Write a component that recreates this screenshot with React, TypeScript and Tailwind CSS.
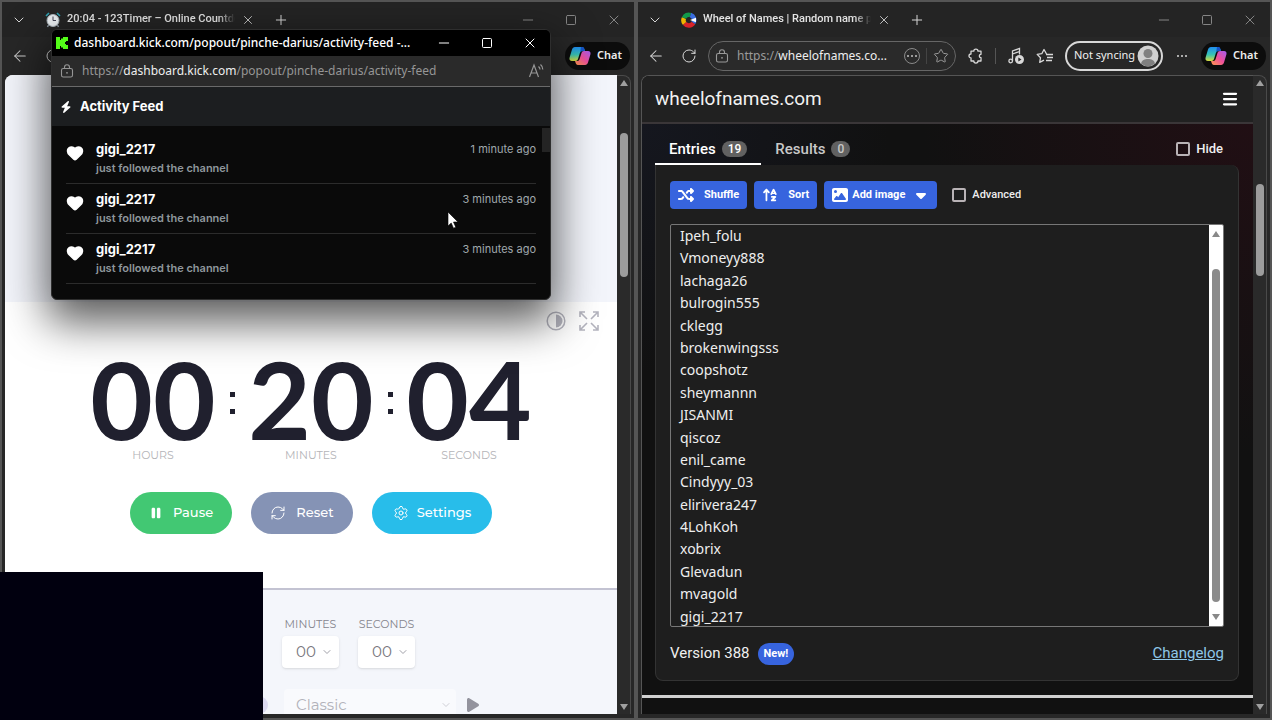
import type { ReactNode } from "react";
import {
  ArrowLeft,
  ChevronDown,
  Heart,
  Menu,
  Minus,
  Plus,
  RefreshCw,
  RotateCw,
  Settings,
  Square,
  Star,
  X,
} from "lucide-react";
import { FaArrowUpAZ, FaBolt, FaCaretDown, FaImage, FaPause, FaPlay, FaShuffle } from "react-icons/fa6";

const FOLLOWS = [
  { name: "gigi_2217", when: "1 minute ago" },
  { name: "gigi_2217", when: "3 minutes ago" },
  { name: "gigi_2217", when: "3 minutes ago" },
];

const ENTRIES = [
  "Ipeh_folu",
  "Vmoneyy888",
  "lachaga26",
  "bulrogin555",
  "cklegg",
  "brokenwingsss",
  "coopshotz",
  "sheymannn",
  "JISANMI",
  "qiscoz",
  "enil_came",
  "Cindyyy_03",
  "elirivera247",
  "4LohKoh",
  "xobrix",
  "Glevadun",
  "mvagold",
  "gigi_2217",
];

/* ---------- ICONS ---------- */

function ClockIcon() {
  return (
    <svg viewBox="0 0 16 16" className="size-4 shrink-0">
      <path d="M1 4 4 1M15 4l-3-3" stroke="#2f9fb0" strokeWidth="1.6" />
      <path d="m3.500 13-1 2M12.500 13l1 2" stroke="#8d99a3" strokeWidth="1.4" />
      <circle cx="8" cy="8.500" r="6" fill="#e9edf0" stroke="#aab4bb" />
      <path d="M8 4.500v4h3" stroke="#445" fill="none" />
    </svg>
  );
}

function WheelIcon() {
  return (
    <svg viewBox="0 0 16 16" className="size-4 shrink-0" fill="none" strokeWidth="4.500">
      <path d="M3.700 11.500A5 5 0 0 1 3 6" stroke="#f0b400" />
      <path d="M3 6A5 5 0 0 1 9.500 3" stroke="#12994a" />
      <path d="M9.500 3A5.300 5.300 0 0 1 12.300 11" stroke="#3a6de0" />
      <path d="M12.300 11A5.300 5.300 0 0 1 3.700 11.500" stroke="#d8232a" />
      <path d="m9 8 6-2.200v4.400z" fill="#fff" stroke="none" />
    </svg>
  );
}

function KickIcon() {
  return (
    <svg viewBox="0 0 12 12" className="size-3 shrink-0" fill="#53fc18">
      <path d="M0 0h4v3h1V1.500h2V0h5v4h-2v1H9v2h1v1h2v4H7v-1.500H5V9H4v3H0z" />
    </svg>
  );
}

function LockIcon() {
  return (
    <svg viewBox="0 0 14 14" className="size-3.5 shrink-0" fill="none" stroke="currentColor" strokeWidth="1.1">
      <rect x="1.500" y="4.500" width="11" height="8.500" rx="1.800" />
      <path d="M4.500 4.500V3.300a2.500 2.500 0 0 1 5 0v1.200" />
      <circle cx="7" cy="8.800" r=".9" fill="currentColor" stroke="none" />
    </svg>
  );
}

function CopilotIcon() {
  return (
    <svg viewBox="0 0 22 20" className="h-5 w-5.5 shrink-0">
      <defs>
        <linearGradient id="copilotCool" x1="0" y1="0" x2="0" y2="1">
          <stop offset="0" stopColor="#1f8df0" />
          <stop offset=".55" stopColor="#38c4b4" />
          <stop offset="1" stopColor="#d8dc3c" />
        </linearGradient>
        <linearGradient id="copilotWarm" x1="1" y1="0" x2="0" y2="1">
          <stop offset="0" stopColor="#a25cf0" />
          <stop offset=".5" stopColor="#ee4f9c" />
          <stop offset="1" stopColor="#ff9a4a" />
        </linearGradient>
      </defs>
      <path d="M6 1h7c1.600 0 2 1 2.500 2.500L16 5h-2.500c-1.500 0-2.200.8-2.700 2.300L9 13c-.4 1.300-1 2-2.500 2H3c-2 0-3-1.500-2.400-3.500L3 3.500C3.500 2 4.400 1 6 1z" fill="url(#copilotCool)" />
      <path d="M12 1h1.500c1.200 0 1.700 1 2 2.500L16 5h-2.500c-1.200 0-2 .6-2.500 2z" fill="#1554c8" />
      <path d="M16 19H9c-1.600 0-2-1-2.500-2.500L6 15h2c1.500 0 2.200-.8 2.700-2.300L12.500 7c.4-1.300 1-2 2.500-2h4c2 0 3 1.500 2.400 3.500L19 16.500C18.500 18 17.600 19 16 19z" fill="url(#copilotWarm)" />
    </svg>
  );
}

function PuzzleIcon() {
  return (
    <svg viewBox="0 0 16 16" className="size-4" fill="none" stroke="currentColor" strokeWidth="1.300" strokeLinejoin="round">
      <path d="M3 3.200h2.800a2.100 2.100 0 0 1 4.200 0h3V6.300a1.700 1.700 0 0 0 0 3.400v3.300h-3a2.100 2.100 0 0 1-4.200 0H3v-3a2 2 0 0 1 0-4z" />
    </svg>
  );
}

function MusicIcon() {
  return (
    <svg viewBox="0 0 18 18" className="size-4.5" fill="none" stroke="currentColor" strokeWidth="1.300">
      <path d="M5.500 14V4l7-2.500v6M5.500 7l7-2.500" />
      <circle cx="3.700" cy="14" r="1.800" />
      <circle cx="12.500" cy="12.500" r="4.500" fill="currentColor" stroke="none" />
      <path d="m11.300 10.500 3.200 2-3.200 2z" fill="#262626" stroke="none" />
    </svg>
  );
}

function FavoritesIcon() {
  return (
    <svg viewBox="0 0 18 16" className="h-4 w-4.5" fill="none" stroke="currentColor" strokeWidth="1.300" strokeLinejoin="round">
      <path d="M10.500 6 8 1.500 5.800 5.700 1.200 6.400l3.300 3.300-.8 4.700L8 12.200" />
      <path d="M10 6.500h7M11 9.500h6M10 12.500h6" />
    </svg>
  );
}

function ReadAloudIcon() {
  return (
    <svg viewBox="0 0 16 16" className="size-4" fill="none" stroke="currentColor" strokeWidth="1.200">
      <path d="m1.500 14 4.500-12 4.500 12M3 10h6" />
      <path d="M10.500 3.500c1 .8 1.500 1.800 1.500 3M12.500 1.500c1.500 1.200 2.300 3 2.300 5" />
    </svg>
  );
}

function ContrastIcon() {
  return (
    <svg viewBox="0 0 20 20" className="size-5">
      <circle cx="10" cy="10" r="8.800" fill="none" stroke="currentColor" strokeWidth="1.500" />
      <path d="M10 3.500a6.500 6.500 0 0 1 0 13z" fill="currentColor" />
    </svg>
  );
}

function ExpandIcon() {
  return (
    <svg viewBox="0 0 20 20" className="size-5" fill="none" stroke="currentColor" strokeWidth="1.600">
      <path d="M1 6V1h5M14 1h5v5M19 14v5h-5M6 19H1v-5M1 1l7 7M19 1l-7 7M19 19l-7-7M1 19l7-7" />
    </svg>
  );
}

/* ---------- BROWSER CHROME ---------- */

function WindowButtons({ className }: { className: string }) {
  return (
    <div className={`flex items-center gap-[29px] ${className}`}>
      <button aria-label="Minimize"><Minus className="size-4" strokeWidth={1.5} /></button>
      <button aria-label="Maximize"><Square className="size-3" strokeWidth={2} /></button>
      <button aria-label="Close"><X className="size-4" strokeWidth={1.5} /></button>
    </div>
  );
}

function TitleBar({ icon, title }: { icon: ReactNode; title: string }) {
  return (
    <div className="flex h-[35px] items-center bg-[#242424] pr-3 pl-[9px] text-[#d6d6d6]">
      <button aria-label="Tab list"><ChevronDown className="size-4" strokeWidth={1.5} /></button>
      <div className="ml-3.5 flex w-[214px] items-center gap-1.5 pl-1">
        {icon}
        <span className="flex-1 overflow-hidden mask-r-from-90% font-[Roboto,sans-serif] text-[11px] font-medium whitespace-nowrap text-[#e4e4e4]">
          {title}
        </span>
        <button aria-label="Close tab"><X className="size-3.5" strokeWidth={1.5} /></button>
      </div>
      <button aria-label="New tab" className="ml-[18px]"><Plus className="size-4" strokeWidth={1.5} /></button>
      <WindowButtons className="ml-auto text-[#858585]" />
    </div>
  );
}

function ChatButton() {
  return (
    <button className="flex h-7 shrink-0 items-center gap-1.5 rounded-full bg-[#0c0c0c] pr-2 pl-1 text-[11px] font-semibold text-[#ececec]">
      <CopilotIcon />
      Chat
    </button>
  );
}

function PageScrollbar({ offset, size }: { offset: string; size: string }) {
  return (
    <div className="flex w-3.5 shrink-0 flex-col items-center rounded-tr-lg border-t border-r border-[#4a4a4a] bg-[#2a2a2a] py-1">
      <div className="border-x-4 border-b-6 border-x-transparent border-b-[#a0a0a0]" />
      <div className={`w-2 rounded-full bg-[#9c9c9c] ${offset} ${size}`} />
      <div className="mt-auto border-x-4 border-t-6 border-x-transparent border-t-[#a0a0a0]" />
    </div>
  );
}

/* ---------- TIMER ---------- */

function ClockPart({ value, label }: { value: string; label: string }) {
  return (
    <div className="flex w-[130px] flex-col items-center">
      <span className="mb-1.5 font-[Lato,sans-serif] text-[108px] leading-[85px] font-bold text-[#20202e]">{value}</span>
      <span className="text-[11px] leading-4 text-[#b4b4b8]">{label}</span>
    </div>
  );
}

function Colon() {
  return (
    <div className="mt-9 flex w-7 flex-col items-center gap-3">
      <span className="size-[5px] bg-[#20202e]" />
      <span className="size-[5px] bg-[#20202e]" />
    </div>
  );
}

function TimeSelect({ id, label }: { id: string; label: string }) {
  return (
    <div className="flex w-[57px] flex-col items-center">
      <label htmlFor={id} className="text-[11px] leading-4 text-[#85858d]">{label}</label>
      <div className="relative mt-1 w-full">
        <select id={id} className="h-8 w-full appearance-none rounded bg-white pl-3.5 text-[15px] text-[#77777d] shadow-sm">
          <option>00</option>
        </select>
        <ChevronDown className="pointer-events-none absolute top-2.5 right-1.5 size-3 text-[#a0a0a8]" strokeWidth={2} />
      </div>
    </div>
  );
}

function TimerWindow() {
  return (
    <section className="flex min-w-0 flex-1 flex-col border-x-2 border-t-2 border-[#555] bg-[#272727]">
      <TitleBar icon={<ClockIcon />} title="20:04 - 123Timer – Online Countdown" />
      <div className="mb-px flex h-[37px] items-center justify-between pr-1 pl-[9px] text-[#d0d0d0]">
        <div className="flex gap-4">
          <button aria-label="Back"><ArrowLeft className="size-[18px]" strokeWidth={1.4} /></button>
          <button aria-label="Refresh"><RotateCw className="size-4" strokeWidth={1.5} /></button>
        </div>
        <ChatButton />
      </div>

      <div className="flex min-h-0 flex-1 px-[3px]">
        <main className="flex min-w-0 flex-1 flex-col overflow-hidden rounded-tl-lg bg-white font-[Montserrat,Inter,sans-serif]">
          <div className="h-[227px] shrink-0 bg-[#f3f5fb]" />

          <div className="h-[288px] shrink-0 border-b-2 border-[#c3c3d2]">
            <div className="flex justify-end gap-[13px] pt-[9px] pr-[18px] text-[#b4b4be]">
              <button aria-label="Dark mode"><ContrastIcon /></button>
              <button aria-label="Full screen"><ExpandIcon /></button>
            </div>
            <div className="mt-[25px] flex justify-center">
              <ClockPart value="00" label="HOURS" />
              <Colon />
              <ClockPart value="20" label="MINUTES" />
              <Colon />
              <ClockPart value="04" label="SECONDS" />
            </div>
            <div className="mt-[29px] flex justify-center gap-[19px] text-[13px] font-medium text-white">
              <button className="flex h-[42px] w-[102px] items-center justify-center gap-2.5 rounded-full bg-[#42c873]">
                <FaPause className="size-3.5" />
                Pause
              </button>
              <button className="flex h-[42px] w-[102px] items-center justify-center gap-2.5 rounded-full bg-[#8593b5]">
                <RefreshCw className="size-4" strokeWidth={1.5} />
                Reset
              </button>
              <button className="flex h-[42px] w-[120px] items-center justify-center gap-2 rounded-full bg-[#28bdea]">
                <Settings className="size-4" strokeWidth={1.5} />
                Settings
              </button>
            </div>
          </div>

          <div className="flex-1 overflow-hidden bg-[#f4f6fb] pt-[26px]">
            <div className="ml-[277px] flex gap-[19px]">
              <TimeSelect id="minutes" label="MINUTES" />
              <TimeSelect id="seconds" label="SECONDS" />
            </div>
            <div className="mt-[21px] ml-[245px] flex items-center">
              <span className="size-[18px] rounded-full bg-[#dcdaf0]" />
              <div className="relative ml-4 w-[172px]">
                <select aria-label="Sound" className="h-8 w-full appearance-none rounded bg-[#f9fafd] pl-3 text-[15px] text-[#b2b2ba]">
                  <option>Classic</option>
                </select>
                <ChevronDown className="pointer-events-none absolute top-2.5 right-1 size-3 text-[#cfcfd6]" strokeWidth={2} />
              </div>
              <button aria-label="Play sound" className="ml-2.5 text-[#93939d]"><FaPlay className="h-4 w-3.5" /></button>
            </div>
          </div>
        </main>
        <PageScrollbar offset="mt-[47px]" size="h-36" />
      </div>
      <div className="h-1.5 border-b-2 border-[#555]" />
    </section>
  );
}

/* ---------- WHEEL OF NAMES ---------- */

const BLUE_BUTTON = "flex h-7 items-center rounded bg-[#3764de] px-2 text-[11px] font-bold text-white";

function CheckBox({ id, label, className }: { id: string; label: string; className: string }) {
  return (
    <div className={`flex items-center gap-1.5 font-medium text-[#eee] ${className}`}>
      <input id={id} type="checkbox" className="size-3.5 appearance-none rounded-xs border-2 border-[#b9b3b6]" />
      <label htmlFor={id}>{label}</label>
    </div>
  );
}

function WheelWindow() {
  return (
    <section className="flex min-w-0 flex-1 flex-col border-x-2 border-t-2 border-[#555] bg-[#272727]">
      <TitleBar icon={<WheelIcon />} title="Wheel of Names | Random name picker" />
      <div className="mb-px flex h-[37px] items-center pr-1 pl-[9px] text-[#d8d8d8]">
        <button aria-label="Back"><ArrowLeft className="size-[18px]" strokeWidth={1.4} /></button>
        <button aria-label="Refresh" className="ml-4"><RotateCw className="size-4" strokeWidth={1.5} /></button>
        <div className="ml-[11px] flex h-[30px] w-[248px] items-center rounded-full border border-[#666] bg-[#2a2a2a] px-1.5 text-[#9a9a9a]">
          <LockIcon />
          <span className="ml-2 flex-1 text-xs whitespace-nowrap">
            https://<span className="text-[#eee]">wheelofnames.co...</span>
          </span>
          <button aria-label="More" className="ml-2.5 flex size-4 items-center justify-center gap-0.5 rounded-full border border-[#8a8a8a]">
            <i className="size-0.5 bg-[#9a9a9a]" />
            <i className="size-0.5 bg-[#9a9a9a]" />
            <i className="size-0.5 bg-[#9a9a9a]" />
          </button>
          <span className="mx-1.5 h-4 w-px bg-[#444]" />
          <button aria-label="Favorite"><Star className="size-4" strokeWidth={1.5} /></button>
        </div>
        <div className="ml-3 flex flex-1 items-center justify-between">
          <button aria-label="Extensions"><PuzzleIcon /></button>
          <span className="h-4 w-px bg-[#555]" />
          <button aria-label="Media"><MusicIcon /></button>
          <button aria-label="Favorites"><FavoritesIcon /></button>
          <button className="flex h-[30px] items-center gap-0.5 rounded-full border-2 border-[#d8d8d8] pr-0.5 pl-[7px] text-[11px] whitespace-nowrap text-[#f0f0f0]">
            Not syncing
            <svg viewBox="0 0 22 22" className="size-[22px]">
              <circle cx="11" cy="11" r="10.500" fill="#d0d0d0" />
              <circle cx="11" cy="8.500" r="4.500" fill="#808080" />
              <path d="M4 18.500c1-3.500 3.500-4.500 7-4.500s6 1 7 4.500a10.500 10.500 0 0 1-14 0z" fill="#808080" />
            </svg>
          </button>
          <button aria-label="Menu" className="flex w-4 items-center justify-center gap-0.5">
            <i className="size-0.5 rounded-full bg-[#d8d8d8]" />
            <i className="size-0.5 rounded-full bg-[#d8d8d8]" />
            <i className="size-0.5 rounded-full bg-[#d8d8d8]" />
          </button>
          <ChatButton />
        </div>
      </div>

      <div className="flex min-h-0 flex-1 px-[3px]">
        <main className="flex min-w-0 flex-1 flex-col overflow-hidden rounded-tl-lg border-t border-l border-[#555] bg-[#111] font-[Roboto,sans-serif]">
          <header className="flex h-12 shrink-0 items-center justify-between border-b-2 border-[#3a3638] bg-[#212121] pr-3.5 pl-[13px]">
            <h1 className="text-[19px] text-[#f2f2f2]">wheelofnames.com</h1>
            <button aria-label="Menu"><Menu className="size-[18px] text-white" strokeWidth={3} /></button>
          </header>

          <div className="flex min-h-0 flex-1 flex-col bg-[radial-gradient(circle_at_100%_0%,#210f14,transparent_40%),radial-gradient(circle_at_0%_0%,#15171f,transparent_30%)] pr-3.5 pl-[13px]">
            <div className="flex h-[41px] items-end justify-between">
              <div role="tablist" className="flex text-[15px] font-medium">
                <button role="tab" aria-selected="true" className="flex h-[30px] items-center gap-1.5 border-b-2 border-white px-3.5 text-white">
                  Entries
                  <span className="rounded-full bg-[#616161] px-1.5 text-xs leading-4">19</span>
                </button>
                <button role="tab" aria-selected="false" className="flex h-[30px] items-center gap-1.5 border-b-2 border-transparent px-3.5 text-[#c8c8c8]">
                  Results
                  <span className="rounded-full bg-[#616161] px-1.5 text-xs leading-4">0</span>
                </button>
              </div>
              <CheckBox id="hide" label="Hide" className="h-8 pr-4 text-[13px]" />
            </div>

            <div className="flex min-h-0 flex-1 flex-col rounded-r-lg rounded-bl-lg border border-t-0 border-[#333] bg-[#1e1e1e] px-3.5 pt-4">
              <div className="flex items-center gap-[7px]">
                <button className={BLUE_BUTTON}><FaShuffle className="mr-2.5 size-4" />Shuffle</button>
                <button className={BLUE_BUTTON}><FaArrowUpAZ className="mr-2.5 size-4" />Sort</button>
                <button className={BLUE_BUTTON}><FaImage className="mr-1 size-4" />Add image<FaCaretDown className="ml-2 size-4" /></button>
                <CheckBox id="advanced" label="Advanced" className="ml-2 text-[11px]" />
              </div>

              <div className="mt-[15px] flex min-h-0 flex-1 overflow-hidden rounded-xs border border-[#777]">
                <textarea
                  aria-label="Entries"
                  defaultValue={ENTRIES.join("\n")}
                  className="min-w-0 flex-1 resize-none overflow-hidden px-[9px] font-['Noto_Sans',sans-serif] text-sm leading-[1.6] text-[#eee] outline-none"
                />
                <div className="flex w-3.5 shrink-0 flex-col items-center bg-white py-1.5">
                  <div className="border-x-4 border-b-6 border-x-transparent border-b-[#888]" />
                  <div className="mt-8 mb-3 w-2 flex-1 rounded-full bg-[#8b8b8b]" />
                  <div className="border-x-4 border-t-6 border-x-transparent border-t-[#888]" />
                </div>
              </div>

              <div className="flex h-[53px] shrink-0 items-center text-[15px] text-[#f0f0f0]">
                Version 388
                <span className="ml-2 rounded-full bg-[#3764de] px-1.5 text-[11px] leading-[22px] font-bold text-white">New!</span>
                <a href="#changelog" className="ml-auto text-[#8fc7e8] underline">Changelog</a>
              </div>
            </div>
          </div>

          <div className="mt-3.5 h-[3px] shrink-0 bg-[#d0d0d0]" />
          <div className="h-4 shrink-0" />
        </main>
        <PageScrollbar offset="mt-[98px]" size="h-[92px]" />
      </div>
      <div className="h-1.5 border-b-2 border-[#555]" />
    </section>
  );
}

/* ---------- ACTIVITY FEED POPUP ---------- */

function ActivityFeed() {
  return (
    <section className="absolute top-[29px] left-[51px] flex h-[271px] w-[500px] flex-col overflow-hidden rounded-md border border-[#2e2e2e] bg-[#0a0a0a] shadow-[0_18px_44px_4px_rgba(0,0,0,0.65)]">
      <div className="flex h-[26px] shrink-0 items-center gap-1.5 bg-black pr-3 pl-1 text-white">
        <KickIcon />
        <span className="text-xs font-medium whitespace-nowrap">dashboard.kick.com/popout/pinche-darius/activity-feed -...</span>
        <WindowButtons className="ml-auto" />
      </div>
      <div className="flex h-[31px] shrink-0 items-center border-b border-[#6a6a6a] bg-[#2a2a2a] pr-1.5 pl-2 text-[#969696]">
        <LockIcon />
        <span className="ml-2 flex-1 text-xs">
          https://<span className="text-[#eee]">dashboard.kick.com</span>/popout/pinche-darius/activity-feed
        </span>
        <button aria-label="Read aloud"><ReadAloudIcon /></button>
      </div>

      <div className="flex min-h-0 flex-1 flex-col font-[Inter,sans-serif]">
        <h2 className="flex h-[39px] shrink-0 items-center gap-2 bg-[#1c1e20] pl-2 text-[13px] font-bold text-white">
          <FaBolt className="size-3" />
          Activity Feed
        </h2>
        <div className="flex min-h-0 flex-1 justify-between">
          <ul className="flex-1 pt-2 pl-3.5">
            {FOLLOWS.map((item, i) => (
              <li key={i} className="flex h-[50px] border-b border-[#2c2c2c] pt-[5px]">
                <Heart className="mt-[5px] mr-3 size-[18px] shrink-0 fill-white text-white" strokeWidth={2} />
                <div className="flex-1">
                  <p className="text-[13px] leading-5 font-bold text-white">{item.name}</p>
                  <p className="text-[11px] leading-[18px] font-semibold text-[#8f979c]">just followed the channel</p>
                </div>
                <time className="text-[11px] leading-5 text-[#a0a8ad]">{item.when}</time>
              </li>
            ))}
          </ul>
          <div className="ml-1.5 w-2 shrink-0 pt-0.5">
            <div className="h-6 bg-[#242424]" />
          </div>
        </div>
      </div>
    </section>
  );
}

export default function App() {
  return (
    <div className="relative flex h-screen w-full overflow-hidden bg-black font-['Noto_Sans',sans-serif]">
      <TimerWindow />
      <WheelWindow />
      <ActivityFeed />

      {/* webcam area */}
      <div className="absolute bottom-0 left-0 h-[148px] w-[263px] bg-[#01000f]" />

      {/* mouse pointer */}
      <svg viewBox="0 0 12 18" className="absolute top-[211px] left-[447px] h-[18px] w-3">
        <path d="M1 1v14l3.200-3 2.300 5.200 2.300-1L6.500 11H11z" fill="#fff" stroke="#000" strokeWidth=".6" />
      </svg>
    </div>
  );
}
